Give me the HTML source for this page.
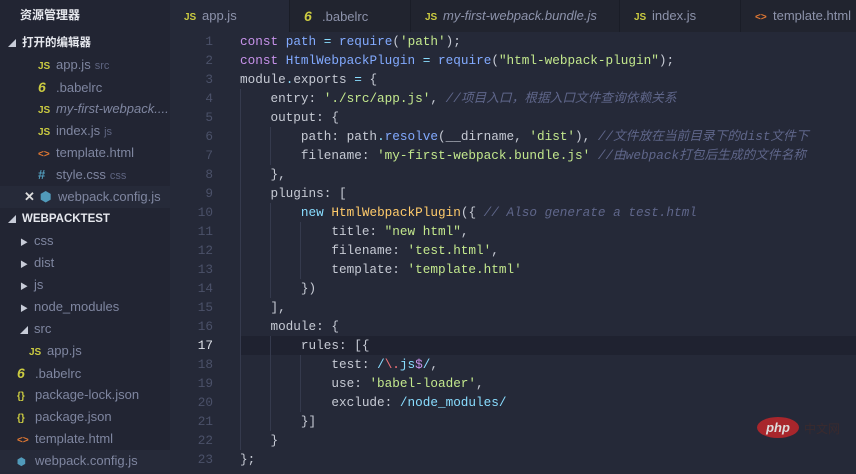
<!DOCTYPE html>
<html><head><meta charset="utf-8"><style>
*{margin:0;padding:0;box-sizing:border-box}
body{width:856px;height:461px;overflow:hidden;background:#252938;font-family:"Liberation Sans","Noto Sans CJK SC",sans-serif;position:relative}
#side{position:absolute;left:0;top:0;width:170px;height:461px;background:#222533;color:#7f86a0;font-size:13px}
.r{position:absolute;left:0;width:170px;height:22px;line-height:22px;white-space:nowrap}
.h{color:#e6e8ee;font-weight:bold;font-size:11.5px}
.js{color:#cbcb41;font-weight:bold;font-size:10px;display:inline-block;width:18px}
.d{color:#5e6480;font-size:11px;margin-left:4px}
.tri{display:inline-block;font-size:8px;color:#c8ccd8;width:14px}
#tabs{position:absolute;left:170px;top:0;width:686px;height:32px;background:#21242f}
.tab{position:absolute;top:0;height:32px;line-height:32px;font-size:13px;color:#8d93ab;padding-left:14px;border-right:1px solid #1a1d27;white-space:nowrap;overflow:hidden}
#code{position:absolute;left:170px;top:32px;width:686px;height:429px;font-family:"Liberation Mono",monospace;font-size:12.7px;color:#c6cad4}
.l{position:absolute;left:0;height:19px;line-height:19px;width:686px;white-space:pre}
.n{position:absolute;left:0;width:43px;text-align:right;color:#4b5169}
.c{position:absolute;left:70px}
.k{color:#c792ea}.v{color:#82aaff}.o{color:#89ddff}.s{color:#c3e88d}.cm{color:#5f668a;font-style:italic;font-family:"Liberation Mono","Noto Sans CJK SC",monospace}.y{color:#ffcb6b}.rd{color:#f07178}
.g{position:absolute;width:1px;background:#353a4d}
</style></head><body>
<div id="side">
<div class="r h" style="top:4px;left:20px;font-size:12px">资源管理器</div>
<div class="r h" style="top:32px;left:8px"><span class="tri">◢</span>打开的编辑器</div>
<div class="r" style="top:54px;left:38px"><span class="js">JS</span>app.js<span class="d">src</span></div>
<div class="r" style="top:76px;left:38px"><span class="js" style="font-style:italic;font-size:14px">6</span>.babelrc</div>
<div class="r" style="top:98px;left:38px;font-style:italic;overflow:hidden;width:130px"><span class="js" style="font-style:normal">JS</span>my-first-webpack....</div>
<div class="r" style="top:120px;left:38px"><span class="js">JS</span>index.js<span class="d">js</span></div>
<div class="r" style="top:142px;left:38px"><span class="js" style="color:#e37933">&lt;&gt;</span>template.html</div>
<div class="r" style="top:164px;left:38px"><span class="js" style="color:#519aba;font-size:13px">#</span>style.css<span class="d">css</span></div>
<div class="r" style="top:186px;left:0;background:#262a39;padding-left:24px"><span style="color:#ddd;font-weight:bold;display:inline-block;width:16px">✕</span><span class="js" style="color:#519aba;font-size:13px">⬢</span>webpack.config.js</div>
<div class="r h" style="top:208px;left:8px"><span class="tri">◢</span>WEBPACKTEST</div>
<div class="r" style="top:230px;left:20px"><span class="tri">▶</span>css</div>
<div class="r" style="top:252px;left:20px"><span class="tri">▶</span>dist</div>
<div class="r" style="top:274px;left:20px"><span class="tri">▶</span>js</div>
<div class="r" style="top:296px;left:20px"><span class="tri">▶</span>node_modules</div>
<div class="r" style="top:318px;left:20px"><span class="tri">◢</span>src</div>
<div class="r" style="top:340px;left:29px"><span class="js">JS</span>app.js</div>
<div class="r" style="top:362px;left:17px"><span class="js" style="font-style:italic;font-size:14px">6</span>.babelrc</div>
<div class="r" style="top:384px;left:17px"><span class="js">{}</span>package-lock.json</div>
<div class="r" style="top:406px;left:17px"><span class="js">{}</span>package.json</div>
<div class="r" style="top:428px;left:17px"><span class="js" style="color:#e37933">&lt;&gt;</span>template.html</div>
<div class="r" style="top:450px;left:0;padding-left:17px;background:#262a39"><span class="js" style="color:#519aba">⬢</span>webpack.config.js</div>
</div>
<div id="tabs">
<div class="tab" style="left:0;width:120px;background:#252938"><span class="js">JS</span>app.js</div>
<div class="tab" style="left:120px;width:121px"><span class="js" style="font-style:italic;font-size:14px">6</span>.babelrc</div>
<div class="tab" style="left:241px;width:209px;font-style:italic"><span class="js" style="font-style:normal">JS</span>my-first-webpack.bundle.js</div>
<div class="tab" style="left:450px;width:121px"><span class="js">JS</span>index.js</div>
<div class="tab" style="left:571px;width:115px;border:none"><span class="js" style="color:#e37933">&lt;&gt;</span>template.html</div>
</div>
<div id="code">
<div class="l" style="top:304px;left:70px;width:616px;background:#1f2230"></div>
<div class="g" style="left:70px;top:57px;height:361px"></div>
<div class="g" style="left:100px;top:95px;height:38px"></div>
<div class="g" style="left:100px;top:171px;height:95px"></div>
<div class="g" style="left:130px;top:190px;height:57px"></div>
<div class="g" style="left:100px;top:304px;height:95px"></div>
<div class="g" style="left:130px;top:323px;height:57px"></div>
<div class="l" style="top:0"><span class="n">1</span><span class="c"><span class="k">const</span> <span class="v">path</span> <span class="o">=</span> <span class="v">require</span>(<span class="s">'path'</span>);</span></div>
<div class="l" style="top:19px"><span class="n">2</span><span class="c"><span class="k">const</span> <span class="v">HtmlWebpackPlugin</span> <span class="o">=</span> <span class="v">require</span>(<span class="s">"html-webpack-plugin"</span>);</span></div>
<div class="l" style="top:38px"><span class="n">3</span><span class="c">module<span class="o">.</span>exports <span class="o">=</span> {</span></div>
<div class="l" style="top:57px"><span class="n">4</span><span class="c">    entry: <span class="s">'./src/app.js'</span>, <span class="cm">//项目入口，根据入口文件查询依赖关系</span></span></div>
<div class="l" style="top:76px"><span class="n">5</span><span class="c">    output: {</span></div>
<div class="l" style="top:95px"><span class="n">6</span><span class="c">        path: path<span class="o">.</span><span class="v">resolve</span>(__dirname, <span class="s">'dist'</span>), <span class="cm">//文件放在当前目录下的dist文件下</span></span></div>
<div class="l" style="top:114px"><span class="n">7</span><span class="c">        filename: <span class="s">'my-first-webpack.bundle.js'</span> <span class="cm">//由webpack打包后生成的文件名称</span></span></div>
<div class="l" style="top:133px"><span class="n">8</span><span class="c">    },</span></div>
<div class="l" style="top:152px"><span class="n">9</span><span class="c">    plugins: [</span></div>
<div class="l" style="top:171px"><span class="n">10</span><span class="c">        <span class="o">new</span> <span class="y">HtmlWebpackPlugin</span>({ <span class="cm">// Also generate a test.html</span></span></div>
<div class="l" style="top:190px"><span class="n">11</span><span class="c">            title: <span class="s">"new html"</span>,</span></div>
<div class="l" style="top:209px"><span class="n">12</span><span class="c">            filename: <span class="s">'test.html'</span>,</span></div>
<div class="l" style="top:228px"><span class="n">13</span><span class="c">            template: <span class="s">'template.html'</span></span></div>
<div class="l" style="top:247px"><span class="n">14</span><span class="c">        })</span></div>
<div class="l" style="top:266px"><span class="n">15</span><span class="c">    ],</span></div>
<div class="l" style="top:285px"><span class="n">16</span><span class="c">    module: {</span></div>
<div class="l" style="top:304px"><span class="n" style="color:#e0e3ea">17</span><span class="c">        rules: [{</span></div>
<div class="l" style="top:323px"><span class="n">18</span><span class="c">            test: <span class="o">/</span><span class="rd">\.</span><span class="o">js</span><span class="k">$</span><span class="o">/</span>,</span></div>
<div class="l" style="top:342px"><span class="n">19</span><span class="c">            use: <span class="s">'babel-loader'</span>,</span></div>
<div class="l" style="top:361px"><span class="n">20</span><span class="c">            exclude: <span class="o">/</span><span class="s" style="color:#89ddff">node_modules</span><span class="o">/</span></span></div>
<div class="l" style="top:380px"><span class="n">21</span><span class="c">        }]</span></div>
<div class="l" style="top:399px"><span class="n">22</span><span class="c">    }</span></div>
<div class="l" style="top:418px"><span class="n">23</span><span class="c">};</span></div>
</div>
<div style="position:absolute;left:757px;top:417px;width:42px;height:21px;border-radius:50%;background:#a8262c;color:#ddd;font-style:italic;font-weight:bold;font-size:13px;text-align:center;line-height:21px;font-family:'Liberation Sans',sans-serif">php</div>
<div style="position:absolute;left:804px;top:420px;color:#3a2a2e;font-size:12px;font-family:'Noto Sans CJK SC',sans-serif">中文网</div>
</body></html>
